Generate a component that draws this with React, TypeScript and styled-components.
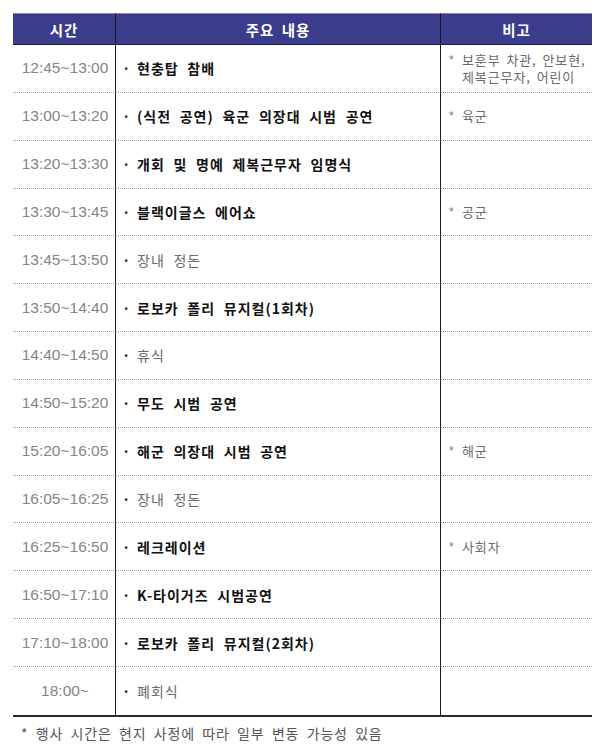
import { FC } from "react";
import styled, { createGlobalStyle } from "styled-components";

interface Row {
  time: string;
  title: string;
  bold: boolean;
  note?: string;
}

const rows: Row[] = [
  { time: "12:45~13:00", title: "현충탑 참배", bold: true, note: "보훈부 차관, 안보현,\n제복근무자, 어린이" },
  { time: "13:00~13:20", title: "(식전 공연) 육군 의장대 시범 공연", bold: true, note: "육군" },
  { time: "13:20~13:30", title: "개회 및 명예 제복근무자 임명식", bold: true },
  { time: "13:30~13:45", title: "블랙이글스 에어쇼", bold: true, note: "공군" },
  { time: "13:45~13:50", title: "장내 정돈", bold: false },
  { time: "13:50~14:40", title: "로보카 폴리 뮤지컬(1회차)", bold: true },
  { time: "14:40~14:50", title: "휴식", bold: false },
  { time: "14:50~15:20", title: "무도 시범 공연", bold: true },
  { time: "15:20~16:05", title: "해군 의장대 시범 공연", bold: true, note: "해군" },
  { time: "16:05~16:25", title: "장내 정돈", bold: false },
  { time: "16:25~16:50", title: "레크레이션", bold: true, note: "사회자" },
  { time: "16:50~17:10", title: "K-타이거즈 시범공연", bold: true },
  { time: "17:10~18:00", title: "로보카 폴리 뮤지컬(2회차)", bold: true },
  { time: "18:00~", title: "폐회식", bold: false },
];

const GlobalStyle = createGlobalStyle`
  body {
    margin: 0;
    background: #ffffff;
    font-family: "Noto Sans CJK KR", "Noto Sans", sans-serif;
  }
`;

const Page = styled.div`
  padding: 13px 8px 0 13px;
`;

const Table = styled.div`
  width: 579px;
  display: grid;
  grid-template-columns: 103px 325px 151px;
  border-bottom: 2px solid #2a2a2a;
`;

const HeadCell = styled.div<{ $last?: boolean }>`
  height: 32px;
  background: #3c3c8d;
  color: #ffffff;
  font-weight: 700;
  font-size: 14.5px;
  letter-spacing: 1px;
  word-spacing: 3px;
  display: flex;
  align-items: center;
  justify-content: center;
  border-top: 1px solid #8a8aa8;
  border-bottom: 1px solid #1c1c40;
  border-right: ${({ $last }) => ($last ? "none" : "1.5px solid #1a1a1a")};
  box-sizing: border-box;
`;

const Cell = styled.div<{ $divider?: boolean; $lastRow?: boolean }>`
  height: 47.85px;
  box-sizing: border-box;
  display: flex;
  align-items: center;
  border-right: ${({ $divider }) => ($divider ? "1.5px solid #1a1a1a" : "none")};
  border-bottom: ${({ $lastRow }) => ($lastRow ? "none" : "1px dotted #9a9a9a")};
`;

const TimeCell = styled(Cell)`
  justify-content: center;
  font-family: "Liberation Sans", Arial, sans-serif;
  font-size: 15.5px;
  color: #858585;
  padding-left: 2px;
`;

const Title = styled.span<{ $bold: boolean }>`
  font-size: 14px;
  letter-spacing: 1px;
  word-spacing: 4.5px;
  font-weight: ${({ $bold }) => ($bold ? 700 : 400)};
  color: ${({ $bold }) => ($bold ? "#111111" : "#6a6a6a")};
  padding-left: 6px;
`;

const Dot = styled.span`
  display: inline-block;
  width: 15px;
  font-weight: 700;
  color: #333333;
`;

const NoteCell = styled(Cell)`
  padding-left: 8px;
`;

const Note = styled.div`
  display: flex;
  font-size: 13px;
  line-height: 17px;
  color: #6a6a6a;
  letter-spacing: 0.9px;
  word-spacing: 2px;
`;

const NoteText = styled.span`
  white-space: pre-line;
`;

const Star = styled.span`
  width: 13px;
  flex-shrink: 0;
  font-family: "Liberation Sans", Arial, sans-serif;
  font-size: 12px;
  color: #777777;
  padding-top: 1px;
`;

const Footnote = styled.div`
  padding: 6px 0 0 8px;
  font-size: 14px;
  letter-spacing: 0.8px;
  word-spacing: 3.5px;
  color: #555555;
`;

const App: FC = () => (
  <>
    <GlobalStyle />
    <Page>
      <Table>
        <HeadCell>시간</HeadCell>
        <HeadCell>주요 내용</HeadCell>
        <HeadCell $last>비고</HeadCell>
        {rows.map((r, i) => {
          const lastRow = i === rows.length - 1;
          return [
            <TimeCell key={`t${i}`} $divider $lastRow={lastRow}>
              {r.time}
            </TimeCell>,
            <Cell key={`c${i}`} $divider $lastRow={lastRow}>
              <Title $bold={r.bold}>
                <Dot>·</Dot>
                {r.title}
              </Title>
            </Cell>,
            <NoteCell key={`n${i}`} $lastRow={lastRow}>
              {r.note && (
                <Note>
                  <Star>*</Star>
                  <NoteText>{r.note}</NoteText>
                </Note>
              )}
            </NoteCell>,
          ];
        })}
      </Table>
      <Footnote>* 행사 시간은 현지 사정에 따라 일부 변동 가능성 있음</Footnote>
    </Page>
  </>
);

export default App;
